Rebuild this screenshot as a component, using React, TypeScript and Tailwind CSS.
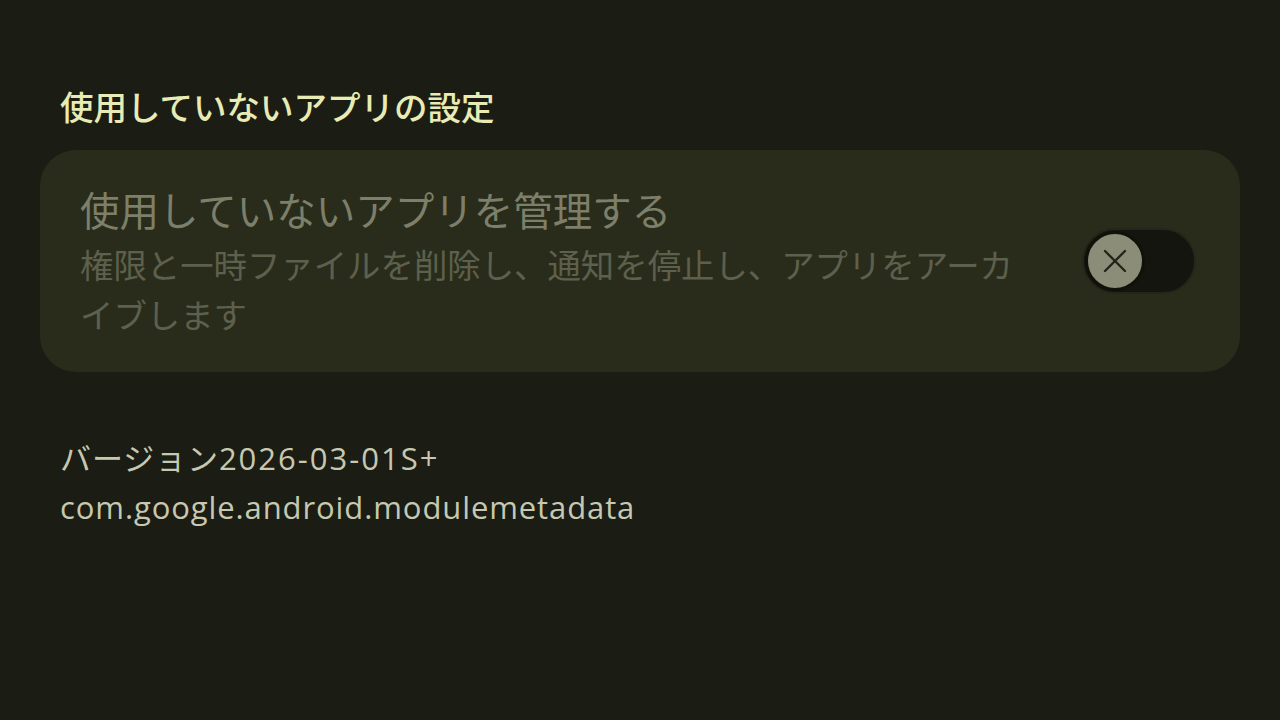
import { X } from 'lucide-react'

const cjk = { fontFamily: '"Noto Sans CJK JP", "Noto Sans", sans-serif' }
const latin = { fontFamily: '"Open Sans", "Noto Sans CJK JP", sans-serif' }

function Toggle() {
  return (
    <div className="flex h-[66px] w-[114px] items-center rounded-full border-2 border-[#24261a] bg-[#14150e] px-[1px]">
      <div className="flex h-[60px] w-[60px] items-center justify-center rounded-full border-[3px] border-[#101109] bg-[#8b8d78]">
        <X className="h-[40px] w-[40px] text-[#23241a]" strokeWidth={1.4} />
      </div>
    </div>
  )
}

export default function App() {
  return (
    <div className="min-h-[720px] w-[1280px] bg-[#1b1c13] pt-[84px]" style={cjk}>
      {/* Section header */}
      <h2 className="px-[60px] text-[33.5px] font-medium leading-[44px] text-[#e8ebb4]">
        使用していないアプリの設定
      </h2>

      {/* Card */}
      <div className="mx-[40px] mt-[22px] flex h-[222px] items-center justify-between rounded-[36px] bg-[#2a2c1b] pl-[40px] pr-[44px]">
        <div className="w-[960px]">
          <div className="text-[39.5px] leading-[52px] text-[#7c7f69]">使用していないアプリを管理する</div>
          <div className="mt-[4px] text-[33.4px] leading-[50px] text-[#5d604c]">
            権限と一時ファイルを削除し、通知を停止し、アプリをアーカイブします
          </div>
        </div>
        <Toggle />
      </div>

      {/* Version info */}
      <div className="mt-[62px] px-[60px] text-[31px] leading-[49px] tracking-[0.9px] text-[#c6c8b1]" style={latin}>
        <div>
          バージョン<span className="tracking-[2px]">2026-03-01S+</span>
        </div>
        <div>com.google.android.modulemetadata</div>
      </div>
    </div>
  )
}
